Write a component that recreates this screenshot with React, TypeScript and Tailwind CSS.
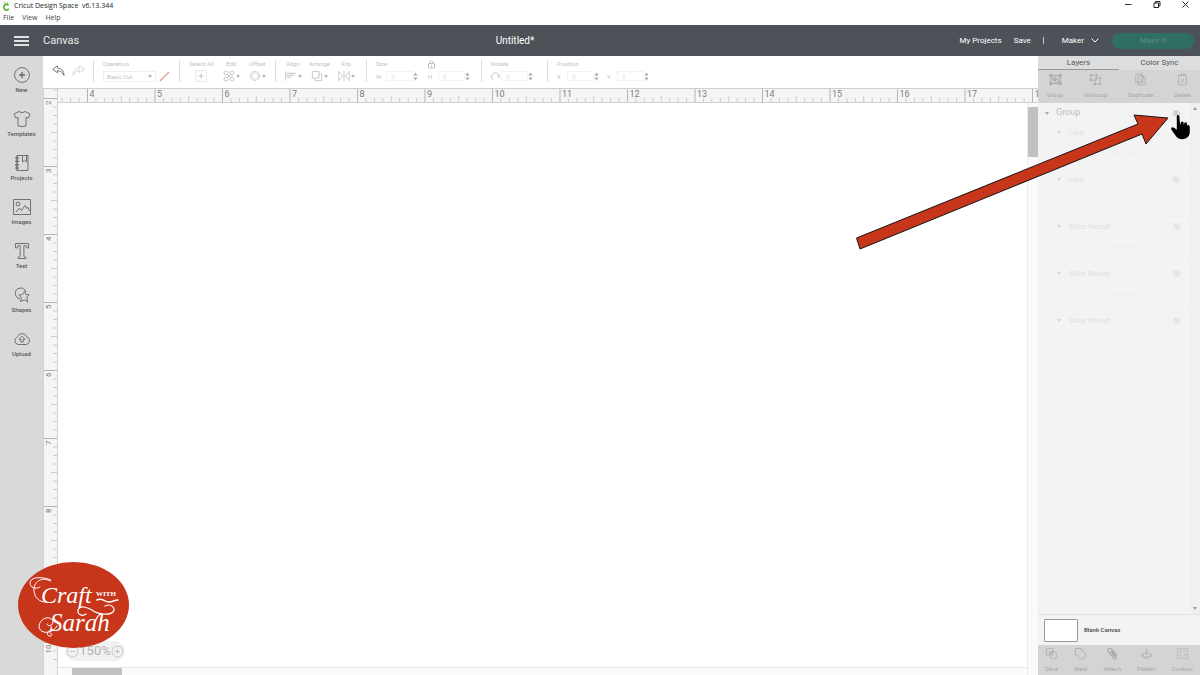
import { useEffect, useRef, useState, type ReactNode } from "react";
import clsx from "clsx";

const LATIN = "font-['Open_Sans','Noto_Sans',sans-serif]";

function Icon({ size = 18, className, children }: { size?: number; className?: string; children: ReactNode }) {
  return (
    <svg
      width={size}
      height={size}
      viewBox="0 0 18 18"
      fill="none"
      stroke="currentColor"
      strokeWidth={0.9}
      className={clsx("shrink-0", className)}
      aria-hidden="true"
    >
      {children}
    </svg>
  );
}

const SIDE_ITEMS = [
  {
    label: "New",
    icon: (
      <>
        <circle cx="9" cy="9" r="7.4" />
        <path d="M9 6v6M6 9h6" strokeWidth="1.3" />
      </>
    ),
  },
  {
    label: "Templates",
    icon: <path d="M6 1.5 1 4l1.6 4L5 7.4V16q4 1 8 0V7.4l2.4.6L17 4l-5-2.500q-3 2.600-6 0z" />,
  },
  {
    label: "Projects",
    icon: (
      <>
        <path d="M4 1.500h11v15H4zM4 1.500v15M9.500 1.500v6.500L11.600 6.300 13.500 8V1.500" />
        <path d="M2 4h4M2 7.400h4M2 10.800h4M2 14h4" strokeWidth="1.2" />
      </>
    ),
  },
  {
    label: "Images",
    icon: (
      <>
        <path d="M0.500 1.500h17v15H.5z" />
        <circle cx="5" cy="6" r="1.900" />
        <path d="m3 14 3.400-4 2 2.600L12 7.500l1.800 3 1-1.300L16.500 13" />
      </>
    ),
  },
  {
    label: "Text",
    icon: <path d="M2.500 1.500h13V6h-1.600q0-2.500-2-2.500h-1V14q0 1.200 2 1.200v1.300H5.100v-1.300q2 0 2-1.200V3.500h-1q-2 0-2 2.500H2.500z" />,
  },
  {
    label: "Shapes",
    icon: (
      <>
        <path d="M7 12.600A5.300 5.300 0 1 1 12.800 6" />
        <path d="m11.500 5.300 1.400 3.200 3.200.2-2.300 2.500 1 4.800-3.300-2.200-4 1.700 1-3.800-2.700-2.600 3.700-.6z" />
      </>
    ),
  },
  {
    label: "Upload",
    icon: (
      <>
        <path d="M5 14.500a4 4 0 0 1-.6-7.600 5 5 0 0 1 9.400 0 3.900 3.900 0 0 1-.8 7.600z" />
        <path d="M9 6.200 6 9.300h1.800V12h2.400V9.300H12z" />
      </>
    ),
  },
];

const GROUP_ACTIONS = [
  {
    label: "Group",
    icon: (
      <>
        <path d="M2.500 3.500h13v11h-13zM5.500 6h4v4h-4zM8 8.500h5v4H8z" strokeWidth="1.3" />
        <path d="M1 2h3v3H1zM14 2h3v3h-3zM1 13h3v3H1zM14 13h3v3h-3z" strokeWidth="1.3" />
      </>
    ),
  },
  {
    label: "UnGroup",
    icon: (
      <>
        <path d="M2.500 3h8v7h-8zM8 7h7.500v8.500H8z" />
        <path d="M1.500 2h2v2h-2zM9.500 2h2v2h-2zM1.500 9h2v2h-2zM14.500 6h2v2h-2zM14.500 14.500h2v2h-2zM7 14.500h2v2H7z" />
      </>
    ),
  },
  {
    label: "Duplicate",
    icon: <path d="M2.500 1.500h9v12h-9zM6 4h7l2.500 2.500v10H6zM13 4v3h2.500M8 8l5 5M13 8l-5 5" />,
  },
  {
    label: "Delete",
    icon: <path d="M3.500 3.500h11v13h-11zM6.500 3.500v-2h5v2M6.500 8l5 5M11.500 8l-5 5" />,
  },
];

const COMBINE_ACTIONS = [
  {
    label: "Slice",
    icon: (
      <>
        <path d="M2 2h9v9H2zM5 8l6-3M6 10l5-3" />
        <circle cx="11.500" cy="11.500" r="5" />
      </>
    ),
  },
  { label: "Weld", icon: <path d="M2 2h8v3.500a5.500 5.500 0 1 1-5 5.500H2z" /> },
  {
    label: "Attach",
    icon: <path strokeWidth="1.4" d="m6 6 6 7a1.500 1.500 0 0 0 2.500-2L7.500 3A2.700 2.700 0 0 0 3 6l7 9a3 3 0 0 0 5 .500M8 6l5 6" />,
  },
  {
    label: "Flatten",
    icon: <path d="M9 2v8M6.500 7.500 9 10.500l2.500-3M6 8 1.500 10.500 9 14.500l7.500-4L12 8M1.500 12.500 9 16.500l7.500-4" />,
  },
  {
    label: "Contour",
    icon: (
      <>
        <path d="M2 2h14v14H2z" strokeDasharray="2.500 1" />
        <path d="M5 9a4 4 0 0 1 4-4M10 13a4 4 0 0 0 3-4M5 12l2 1M11 5l2 1" />
      </>
    ),
  },
];

const LAYERS = ["Line", "Line", "Slice Result", "Slice Result", "Slice Result"];

function tickLength(i: number) {
  if (i % 8 === 0) return 15;
  return i % 4 === 0 ? 6 : 4;
}

// Draws eighth-inch ticks along its own length, however long the window makes it.
function Ruler({ vertical = false, first, start, inch }: { vertical?: boolean; first: number; start: number; inch: number }) {
  const ref = useRef<HTMLDivElement>(null);
  const [length, setLength] = useState(0);

  useEffect(() => {
    const el = ref.current;
    if (!el) return;
    const measure = () => setLength(vertical ? el.clientHeight : el.clientWidth);
    measure();
    const observer = new ResizeObserver(measure);
    observer.observe(el);
    return () => observer.disconnect();
  }, [vertical]);

  const step = inch / 8;
  const from = -Math.floor(start / step);
  const count = Math.max(0, Math.floor(length / step));
  const ticks = Array.from({ length: count }, (_, i) => i + from).filter((i) => start + i * step < length);

  return (
    <div ref={ref} className={clsx("relative min-h-0 min-w-0 overflow-hidden", vertical ? "h-full w-full" : "h-full flex-1")}>
      <svg width="100%" height="100%" className="absolute inset-0" aria-hidden="true">
        {ticks.map((i) => {
          const p = start + i * step;
          const len = tickLength(i);
          const major = i % 8 === 0;
          return (
            <g key={i} fill="#7c7c7c">
              <path d={vertical ? `M${13 - len} ${p}H13` : `M${p} ${13 - len}V13`} stroke={major ? "#b4b4b4" : "#cccccc"} />
              {major && !vertical && (
                <text x={p + 2} y="8" fontSize="9">
                  {first + i / 8}
                </text>
              )}
              {major && vertical && (
                <text transform={`translate(7 ${p + 2}) rotate(-90)`} textAnchor="end" fontSize="8">
                  {first + i / 8}
                </text>
              )}
            </g>
          );
        })}
      </svg>
    </div>
  );
}

function Section({ className, children }: { className?: string; children: ReactNode }) {
  return <div className={clsx("flex h-[22px] shrink-0 border-l border-[#dedede] pl-[9px]", className)}>{children}</div>;
}

function Tool({ label, className, children }: { label: string; className?: string; children: ReactNode }) {
  return (
    <div className={clsx("flex flex-col justify-between", className)}>
      <span className="text-[6px] leading-[7px] whitespace-nowrap">{label}</span>
      <div className="flex h-3 items-center">{children}</div>
    </div>
  );
}

function ToolButton({ label, className, caret = true, children }: { label: string; className?: string; caret?: boolean; children: ReactNode }) {
  return (
    <button type="button" className={clsx("flex flex-col items-center justify-between", className)}>
      <span className="text-[6px] leading-[7px] whitespace-nowrap">{label}</span>
      <span className="flex h-3 items-center">
        <Icon size={12}>{children}</Icon>
        {caret && <Caret className="ml-px text-[#b5b5b5]" />}
      </span>
    </button>
  );
}

function Caret({ className }: { className?: string }) {
  return (
    <svg width="4" height="3" viewBox="0 0 4 3" fill="currentColor" className={clsx("shrink-0", className)} aria-hidden="true">
      <path d="M0 0h4L2 3z" />
    </svg>
  );
}

function NumberField({ label, name, mark }: { label: string; name: string; mark?: ReactNode }) {
  return (
    <label className="flex h-3 items-center text-[6px]">
      <span className="flex w-[10px] shrink-0 items-center">{mark ?? label}</span>
      <input
        type="text"
        name={name}
        aria-label={name}
        defaultValue="0"
        className="h-[10px] w-[27px] border border-[#f3f3f3] bg-white px-1 text-[6px] text-[#e2e2e2] outline-none"
      />
      <svg width="5" height="9" viewBox="0 0 5 9" fill="#a8a8a8" aria-hidden="true">
        <path d="M.5 3.500h4L2.500.5zM.5 5.500h4l-2 3z" />
      </svg>
    </label>
  );
}

function HiddenEye() {
  return (
    <svg width="9" height="9" viewBox="0 0 18 18" fill="none" stroke="currentColor" strokeWidth="2" aria-hidden="true">
      <path d="M1 9q8-10 16 0-8 10-16 0zM3 2l12 14" />
      <circle cx="9" cy="9" r="2.500" />
    </svg>
  );
}

function TitleBar() {
  return (
    <div className={clsx("flex h-[25px] shrink-0 justify-between bg-white text-[#222]", LATIN)}>
      <div>
        <div className="flex h-[12px] items-center gap-1 pl-[2px] text-[7px] leading-[10px]">
          <svg width="8" height="10" viewBox="0 0 8 10" fill="none" stroke="#5fb53b" aria-hidden="true">
            <path d="M6.600 4.300Q3.500 2.400 2.200 4.500T3 8.500t3.700-.7" strokeWidth="1.700" />
            <path d="M3.500 3 2 1M5 3l1-2" strokeWidth=".9" />
          </svg>
          <span className="whitespace-pre">Cricut Design Space  v6.13.344</span>
        </div>
        <nav className="flex h-[13px] items-center gap-[8px] pl-[3px] text-[7px] text-[#444]">
          <button type="button">File</button>
          <button type="button">View</button>
          <button type="button">Help</button>
        </nav>
      </div>
      <div className="flex h-[9px] items-center gap-[21px] pr-[11px]">
        <button type="button" aria-label="Minimize">
          <svg width="7" height="7" viewBox="0 0 7 7" stroke="#333" fill="none"><path d="M0 3.500h6.500" /></svg>
        </button>
        <button type="button" aria-label="Restore">
          <svg width="8" height="7" viewBox="0 0 8 7" stroke="#222" fill="none"><path d="M1 2h4.500v4.500H1zM2.500 2V.5H7V5H5.500" /></svg>
        </button>
        <button type="button" aria-label="Close">
          <svg width="7" height="7" viewBox="0 0 7 7" stroke="#333" fill="none"><path d="m.5.5 6 6M6.500.5l-6 6" /></svg>
        </button>
      </div>
    </div>
  );
}

function Header() {
  return (
    <header className="flex h-[31px] shrink-0 items-center bg-[#4d5258] text-white">
      <div className="flex w-[80px] shrink-0 items-center">
        <button type="button" aria-label="Menu" className="ml-[14px] mr-[14px] flex flex-col gap-[2px]">
          <span className="h-[2px] w-[15px] bg-[#dfe1e2]" />
          <span className="h-[2px] w-[15px] bg-[#dfe1e2]" />
          <span className="h-[2px] w-[15px] bg-[#dfe1e2]" />
        </button>
        <span className="text-[11px] leading-4 text-[#e8e9ea]">Canvas</span>
      </div>
      <h1 className="flex-1 text-center text-[10px] leading-4">Untitled*</h1>
      <div className="flex w-[250px] shrink-0 items-center justify-end pr-[6px] text-[8px]">
        <a href="#projects">My Projects</a>
        <button type="button" className="ml-3">Save</button>
        <span className="mx-[12px] h-[7px] w-px bg-[#c6c8ca]" />
        <button type="button" className="ml-[6px] flex items-center gap-[7px]">
          Maker
          <svg width="8" height="5" viewBox="0 0 8 5" fill="none" stroke="currentColor"><path d="m.5.5 3.500 3.500L7.500.5" /></svg>
        </button>
        <button type="button" className="ml-[13px] h-4 w-[82px] rounded-full bg-[#2f6f62] text-[#5b8a80]">
          Make It
        </button>
      </div>
    </header>
  );
}

function Sidebar() {
  return (
    <nav className="w-[43px] shrink-0 bg-[#d9d9d9] text-[#666]">
      {SIDE_ITEMS.map((item) => (
        <button key={item.label} type="button" className="flex h-11 w-full flex-col items-center pt-[10px]">
          <Icon>{item.icon}</Icon>
          <span className="text-[6px] leading-[11px] font-medium text-[#555]">{item.label}</span>
        </button>
      ))}
    </nav>
  );
}

function Toolbar() {
  return (
    <div className="flex h-8 shrink-0 items-center overflow-hidden bg-white pb-[2px] text-[#c2c2c2]">
      <div className="flex w-[50px] shrink-0 gap-[7px] pl-[9px]">
        <button type="button" aria-label="Undo" className="text-[#6b6b6b]">
          <svg width="13" height="12" viewBox="0 0 13 12" fill="none" stroke="currentColor" strokeWidth=".9">
            <path d="M5.500.8.7 4.300l4.800 3.500V5.500q4-.3 6.500 5Q12 3.500 5.500 3z" />
          </svg>
        </button>
        <button type="button" aria-label="Redo" className="text-[#d3d3d3]">
          <svg width="13" height="12" viewBox="0 0 13 12" fill="none" stroke="currentColor" strokeWidth=".9">
            <path d="m7.500.8 4.800 3.500-4.800 3.500V5.500q-4-.3-6.500 5Q1 3.500 7.500 3z" />
          </svg>
        </button>
      </div>
      <Section className="w-[86px]">
        <Tool label="Operation">
          <span className="relative flex items-center">
            <select
              aria-label="Operation"
              className="h-[11px] w-[53px] appearance-none border border-[#f0f0f0] bg-white px-[3px] text-[6px] leading-[9px] outline-none"
            >
              <option>Basic Cut</option>
            </select>
            <Caret className="pointer-events-none absolute right-1 text-[#b5b5b5]" />
          </span>
          <button type="button" aria-label="Pen color" className="ml-[3px]">
            <svg width="11" height="11" viewBox="0 0 11 11" stroke="#e3a29b" strokeWidth="1.500"><path d="m1 10 9-9" /></svg>
          </button>
        </Tool>
      </Section>
      <Section className="w-[96px] gap-[9px]">
        <ToolButton label="Select All" caret={false}>
          <path d="M1 1h16v16H1z" strokeDasharray="3 1.500" />
          <path d="M9 5.500v7M5.500 9h7" strokeWidth="1.500" />
        </ToolButton>
        <ToolButton label="Edit" className="w-[17px]">
          <path d="m6 6 6 6M12 6l-6 6" strokeWidth="1.500" />
          <circle cx="4.500" cy="4.500" r="3" strokeWidth="1.300" />
          <circle cx="13.500" cy="4.500" r="3" strokeWidth="1.300" />
          <circle cx="4.500" cy="13.500" r="3" strokeWidth="1.300" />
          <circle cx="13.500" cy="13.500" r="3" strokeWidth="1.300" />
        </ToolButton>
        <ToolButton label="Offset" className="w-[17px]">
          <circle cx="9" cy="9" r="7" strokeDasharray="3 1.500" strokeWidth="1.500" />
          <circle cx="9" cy="9" r="5" />
        </ToolButton>
      </Section>
      <Section className="w-[91px] gap-[8px]">
        <ToolButton label="Align" className="w-[16px]">
          <path d="M1 2v14M3 5h13M3 8h11M3 11h6" strokeWidth="1.500" />
        </ToolButton>
        <ToolButton label="Arrange">
          <path d="M2 2h10v10H2zM6 12v4h10V6h-4" strokeWidth="1.300" />
        </ToolButton>
        <ToolButton label="Flip" className="w-[16px]">
          <path d="M1 2v14l6-7zM17 2v14l-6-7zM9 1v16" strokeWidth="1.200" />
        </ToolButton>
      </Section>
      <Section className="w-[115px]">
        <Tool label="Size">
          <NumberField label="W" name="Width" />
        </Tool>
        <div className="ml-[10px] flex flex-col justify-between">
          <button type="button" aria-label="Lock proportions" className="w-[7px]">
            <svg width="7" height="9" viewBox="0 0 7 9" fill="none" stroke="currentColor" className="block">
              <path d="M.5 3.500h6v4.500h-6zM2 3.500v-2q1.500-1.500 3 0v2M3.500 5v2" />
            </svg>
          </button>
          <NumberField label="H" name="Height" />
        </div>
      </Section>
      <Section className="w-[66px]">
        <Tool label="Rotate">
          <NumberField
            label="Rotate"
            name="Rotation"
            mark={
              <Icon size={9}>
                <path d="M5 16A7.500 7.500 0 1 1 16 9M12.500 7.500 16 11l1.500-5" strokeWidth="1.800" />
              </Icon>
            }
          />
        </Tool>
      </Section>
      <Section>
        <Tool label="Position">
          <NumberField label="X" name="Position X" />
        </Tool>
        <div className="ml-[8px] flex items-end">
          <NumberField label="Y" name="Position Y" />
        </div>
      </Section>
    </div>
  );
}

function Workspace() {
  return (
    <main className="flex min-w-0 flex-1 flex-col">
      <Toolbar />
      <div className="flex min-h-0 flex-1 border-t border-[#cfcfcf]">
        <div className="w-[15px] shrink-0 border-x border-[#d2d2d2] bg-[#f5f5f5]">
          <Ruler vertical first={2} start={9.5} inch={68} />
        </div>
        <div className="flex min-w-0 flex-1 flex-col">
          <div className="flex h-[14px] shrink-0 border-b border-[#cfcfcf] bg-[#f5f5f5]">
            <Ruler first={4} start={29.5} inch={67.5} />
          </div>
          <div className="flex min-h-0 flex-1">
            <div className="relative flex min-w-0 flex-1 flex-col">
              <div className="flex-1 bg-white" />
              <div className="h-2 border-t border-[#e4e4e4] bg-[#fbfbfb] pl-[14px]">
                <div className="h-full w-[50px] bg-[#c1c1c1]" />
              </div>
              <div className="absolute bottom-[14px] left-[7px] flex h-[20px] w-[60px] items-center justify-center rounded-full bg-[#f1f1f1] text-[#b4b4b4]">
                <button type="button" aria-label="Zoom out">
                  <Icon size={13}>
                    <circle cx="9" cy="9" r="7.500" />
                    <path d="M5.500 9h7" />
                  </Icon>
                </button>
                <span className="text-[13px] leading-4">150%</span>
                <button type="button" aria-label="Zoom in">
                  <Icon size={13}>
                    <circle cx="9" cy="9" r="7.500" />
                    <path d="M5.500 9h7M9 5.500v7" />
                  </Icon>
                </button>
              </div>
            </div>
            <div className="w-[11px] shrink-0 border-l border-[#ececec] bg-[#fafafa] pt-1">
              <div className="h-[50px] bg-[#c1c1c1]" />
            </div>
          </div>
        </div>
      </div>
    </main>
  );
}

function ActionRow({ actions, className }: { actions: { label: string; icon: ReactNode }[]; className?: string }) {
  return (
    <div className={clsx("flex shrink-0 justify-between bg-[#d4d4d4] text-[#a6a6a6]", className)}>
      {actions.map((action) => (
        <button key={action.label} type="button" className="flex flex-col items-center justify-between">
          <Icon size={13}>{action.icon}</Icon>
          <span className="text-[6px] leading-[8px]">{action.label}</span>
        </button>
      ))}
    </div>
  );
}

function LayersPanel() {
  return (
    <aside className="flex w-[162px] shrink-0 flex-col bg-[#f3f3f3]">
      <div className="grid h-[14px] shrink-0 grid-cols-2 bg-[#dcdddf] text-[8px] leading-[12px] text-[#555]" role="tablist">
        <button type="button" role="tab" aria-selected="true" className="border-b border-[#999]">Layers</button>
        <button type="button" role="tab" aria-selected="false" className="border-b border-[#dcdddf]">Color Sync</button>
      </div>
      <ActionRow actions={GROUP_ACTIONS} className="h-[33px] px-[9px] pt-[3px] pb-[4px]" />
      <div className="flex min-h-0 flex-1">
        <div className="min-w-0 flex-1">
          <div className="flex h-5 items-center pl-[7px] pr-[9px] text-[9px] text-[#c0c0c0]">
            <Caret className="mr-[7px] text-[#aaa]" />
            <span className="flex-1">Group</span>
            <button type="button" aria-label="Show group"><HiddenEye /></button>
          </div>
          {LAYERS.map((name, i) => (
            <div key={i} className="ml-[18px] h-[47px] border-b border-[#efefef] pr-[9px] last:border-0">
              <div className="flex h-[19px] items-center text-[8px] text-[#e0e0e0]">
                <Caret className="mr-[8px] ml-px text-[#d6d6d6]" />
                <span className="flex-1">{name}</span>
                <button type="button" aria-label={`Show ${name}`} className="text-[#dedede]"><HiddenEye /></button>
              </div>
              <div className="flex h-[23px] items-center justify-center pl-2 text-[7px] text-[#efefef]">Basic Cut</div>
            </div>
          ))}
        </div>
        <div className="flex w-[10px] flex-col items-center justify-between bg-[#f0f0f0] py-1 text-[#999]">
          <Caret className="rotate-180" />
          <Caret />
        </div>
      </div>
      <div className="flex h-[31px] shrink-0 items-center gap-[6px] border-t border-[#e2e2e2] bg-[#f3f3f3] pl-[6px]">
        <div className="h-[23px] w-[34px] rounded-[1px] border border-[#999] bg-white" />
        <span className="text-[6px] leading-[8px] font-medium text-[#444]">Blank Canvas</span>
      </div>
      <ActionRow actions={COMBINE_ACTIONS} className="h-[30px] px-[7px] pt-[2px] pb-[2px]" />
    </aside>
  );
}

function Logo() {
  return (
    <svg
      width="112"
      height="87"
      viewBox="0 0 112 87"
      className="absolute bottom-[27px] left-[17px]"
      role="img"
      aria-label="Craft with Sarah"
    >
      <ellipse cx="56.500" cy="44" rx="55.500" ry="43" fill="#c7351b" />
      <g fill="#fff" fontFamily="'Liberation Serif', serif">
        <text x="24" y="42" fontSize="24" fontStyle="italic">Craft</text>
        <text x="79" y="35" fontSize="7" fontWeight="bold">WITH</text>
        <text x="33" y="70" fontSize="25" fontStyle="italic">Sarah</text>
      </g>
      <g fill="none" stroke="#fff" strokeLinecap="round">
        <path d="M23 26c-5 3-10 0-10-4 0-6 11-7 21-3" />
        <path d="M33 20c-8-5-17 1-16 10 1 7 5 11 12 11" />
        <path d="M80 39c5-3 7 2 12 2 4 0 5-2 9-2" strokeWidth="1.500" />
        <path d="M69 53c-4 3-9 0-8-4 2-5 9-3 14 0 5 4 17 6 21 2 3-4-2-9-8-6" strokeWidth="1.200" />
        <path d="M84 53c-3 1-4 3-5 6" strokeWidth="1.200" />
        <path d="M40 65c-5 9-18 8-18 0 1-9 13-11 14-4 0 4-6 5-6 2" />
        <path d="M35 69c-5 0-6 5-3 6s4-3 1-3" />
      </g>
    </svg>
  );
}

function Pointer() {
  return (
    <svg width="336" height="138" viewBox="856 113 336 138" className="pointer-events-none absolute top-[113px] right-[8px]" aria-hidden="true">
      <path
        d="m856.500 238 281.500-114-4-9 34 3-22 26-4-10-282 115z"
        fill="#c7351b"
        stroke="#151515"
        strokeLinejoin="miter"
      />
      <path
        d="M1176.800 116q1.200-2 2.500 0l.8 9 1-3q1.300-1 2.300 0l.5 3 .7-2.500q1.500-.7 2.200.5l.4 2.500q2.300-1.500 2.600 1.500v4.500q.3 6-5.800 7.500-6 .8-8.500-3.500l-4.500-6.500q.3-2.800 3-1.200l2.800 2z"
        fill="#000"
      />
    </svg>
  );
}

export default function App() {
  return (
    <div className="relative flex h-screen flex-col overflow-hidden font-[Roboto,'Liberation_Sans',sans-serif]">
      <TitleBar />
      <Header />
      <div className="flex min-h-0 flex-1">
        <Sidebar />
        <Workspace />
        <LayersPanel />
      </div>
      <Logo />
      <Pointer />
    </div>
  );
}
